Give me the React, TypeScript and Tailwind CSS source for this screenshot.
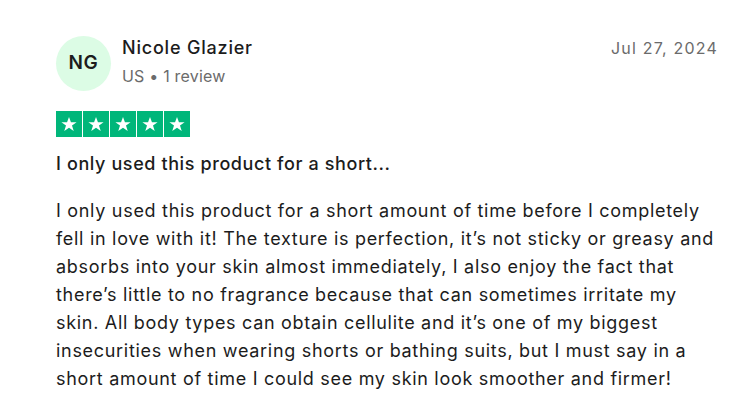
import React from 'react';

function Star() {
  return (
    <div className="w-[26px] h-[26px] bg-[#00b67a] flex items-center justify-center">
      <svg viewBox="0 0 24 24" className="w-[18px] h-[18px]" fill="#fff">
        <path d="M12 2.5l2.6 7.1h7.5l-6.1 4.5 2.3 7.3L12 16.9l-6.3 4.5L8 14.1 1.9 9.6h7.5z" />
      </svg>
    </div>
  );
}

// lines kept as in the original card so wrapping matches
const bodyLines = [
  'I only used this product for a short amount of time before I completely',
  'fell in love with it! The texture is perfection, it’s not sticky or greasy and',
  'absorbs into your skin almost immediately, I also enjoy the fact that',
  'there’s little to no fragrance because that can sometimes irritate my',
  'skin. All body types can obtain cellulite and it’s one of my biggest',
  'insecurities when wearing shorts or bathing suits, but I must say in a',
  'short amount of time I could see my skin look smoother and firmer!',
];

export default function App() {
  return (
    <div className="w-[756px] h-[403px] bg-white overflow-hidden font-['Inter',sans-serif] text-[#1c1c1c]">
      <div className="pl-[56px] pr-[38px] pt-[36px]">
        {/* Header */}
        <div className="flex items-start justify-between">
          <div className="flex items-center gap-[11px]">
            <div className="w-[55px] h-[55px] rounded-full bg-[#dcfce5] flex items-center justify-center text-[19px] font-semibold tracking-[0.6px]">
              NG
            </div>
            <div className="flex flex-col -mt-[4px]">
              <span className="text-[18px] font-medium leading-[26px] tracking-[0.8px]">Nicole Glazier</span>
              <span className="mt-[3px] text-[16px] text-[#6b6b6b] leading-[24px] tracking-[0.2px]">US • 1 review</span>
            </div>
          </div>
          <span className="text-[16px] text-[#6b6b6b] leading-[24px] tracking-[1.2px]">Jul 27, 2024</span>
        </div>

        {/* Rating */}
        <div className="flex gap-[1px] mt-[20px]">
          <Star />
          <Star />
          <Star />
          <Star />
          <Star />
        </div>

        {/* Review */}
        <h2 className="mt-[14px] text-[18px] font-medium leading-[26px] tracking-[0.6px]">I only used this product for a short...</h2>
        <p className="mt-[20px] text-[18px] leading-[28px] tracking-[0.7px] whitespace-nowrap">
          {bodyLines.map((line) => (
            <span key={line} className="block">
              {line}
            </span>
          ))}
        </p>
      </div>
    </div>
  );
}
